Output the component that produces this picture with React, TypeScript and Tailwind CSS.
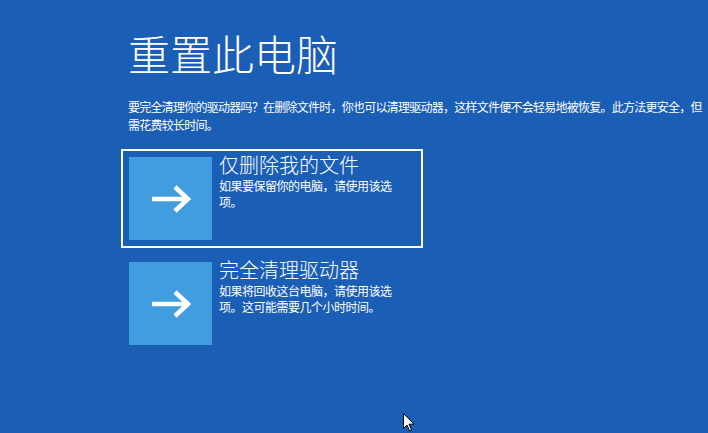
const font = { fontFamily: '"Noto Sans CJK SC", "Noto Sans", sans-serif' }

function ArrowTile() {
  return (
    <div className="flex h-[83px] w-[83px] shrink-0 items-center justify-center bg-[#3f9de0]">
      <svg width="42" height="30" viewBox="0 0 42 30" fill="none">
        <path d="M2 15 H37" stroke="white" strokeWidth="4.5" />
        <path d="M25 3 L38 15 L25 27" stroke="white" strokeWidth="4.5" strokeLinejoin="miter" />
      </svg>
    </div>
  )
}

function Option({ title, desc, selected }: { title: string; desc: string; selected?: boolean }) {
  return (
    <div
      className={`-ml-[7px] flex w-[302px] border-2 p-[6px] ${selected ? 'border-white' : 'border-transparent'}`}
    >
      <ArrowTile />
      <div className="ml-[7px] w-[180px] text-white">
        <div className="-mt-[4px] text-[20px] leading-[24px] font-light">{title}</div>
        <div className="mt-[1px] text-[12px] leading-[16px] tracking-[-0.5px]">{desc}</div>
      </div>
    </div>
  )
}

export default function App() {
  return (
    <div className="relative h-[433px] w-[708px] overflow-hidden bg-[#1b5eb6] text-white" style={font}>
      <div className="pl-[128px] pt-[30px]">
        <h1 className="text-[42px] leading-[46px] font-light">重置此电脑</h1>
        <p className="mt-[22px] w-[578px] text-[12px] leading-[18px] tracking-[-0.75px]">
          要完全清理你的驱动器吗？在删除文件时，你也可以清理驱动器，这样文件便不会轻易地被恢复。此方法更安全，但
          <br />
          需花费较长时间。
        </p>
        <div className="mt-[15px] flex flex-col gap-[6px]">
          <Option title="仅删除我的文件" desc="如果要保留你的电脑，请使用该选项。" selected />
          <Option title="完全清理驱动器" desc="如果将回收这台电脑，请使用该选项。这可能需要几个小时时间。" />
        </div>
      </div>

      {/* mouse cursor */}
      <svg className="absolute left-[403px] top-[413px]" width="12" height="19" viewBox="0 0 12 19">
        <path d="M0.5 0.5 V15.5 L4 12 L6.5 18 L8.5 17 L6 11.2 H11 Z" fill="white" stroke="black" strokeWidth="1" />
      </svg>
    </div>
  )
}
